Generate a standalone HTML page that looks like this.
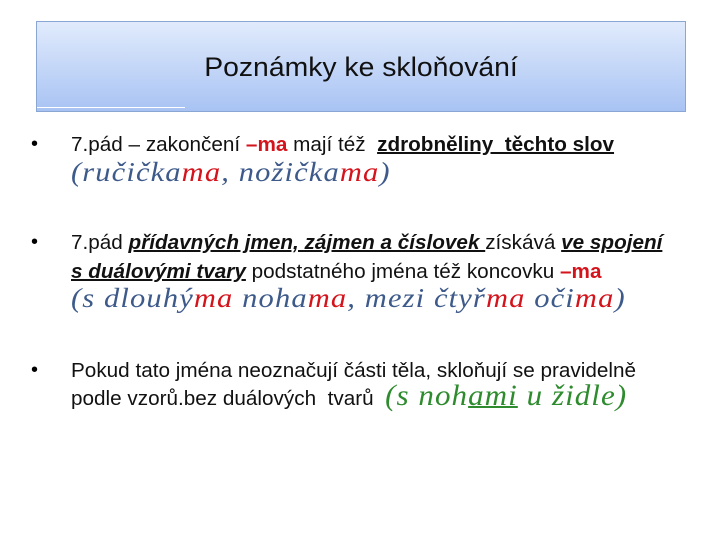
<!DOCTYPE html>
<html><head><meta charset="utf-8"><style>
body{margin:0;width:720px;height:540px;background:#fff;position:relative;overflow:hidden;font-family:"Liberation Sans",sans-serif;}
.box{position:absolute;left:36px;top:21px;width:648px;height:89px;border:1px solid #8aa6d2;background:linear-gradient(#e1ebfc,#a8c3f3);}
.box .t{position:absolute;left:0;right:0;top:30px;text-align:center;font-size:27px;color:#111;transform:scaleX(1.05);}
.box .u{position:absolute;left:0;bottom:3px;width:148px;height:1px;background:#fff;}
.l{position:absolute;white-space:nowrap;font-size:20px;line-height:24px;color:#111;transform-origin:left top;transform:scaleX(1.035);}
.b{position:absolute;left:31px;font-size:20px;}
.s{font-family:"Liberation Serif",serif;font-style:italic;font-size:27px;line-height:30px;color:#3d5a8a;letter-spacing:1px;transform:scaleX(1.13)}
.r{color:#d4141c}
.g{color:#2e8b2e;font-family:"Liberation Serif",serif;font-style:italic;font-size:30px;line-height:20px;letter-spacing:1px}
u{text-decoration-thickness:2px}
</style></head><body>
<div class="box"><div class="t">Poznámky ke skloňování</div><div class="u"></div></div>
<div class="b" style="top:133px">•</div>
<div class="l" style="left:71px;top:133px">7.pád – zakončení <b class="r">–ma</b> mají též &nbsp;<b><u>zdrobněliny &nbsp;těchto slov</u></b></div>
<div class="l s" style="left:71px;top:157px">(ručička<span class="r">ma</span>, nožička<span class="r">ma</span>)</div>
<div class="b" style="top:231px">•</div>
<div class="l" style="left:71px;top:231px">7.pád <b><i><u>přídavných jmen, zájmen a číslovek </u></i></b>získává <b><i><u>ve spojení</u></i></b></div>
<div class="l" style="left:71px;top:260px"><b><i><u>s duálovými tvary</u></i></b> podstatného jména též koncovku <b class="r">–ma</b></div>
<div class="l s" style="left:71px;top:283px">(s dlouhý<span class="r">ma</span> noha<span class="r">ma</span>, mezi čtyř<span class="r">ma</span> oči<span class="r">ma</span>)</div>
<div class="b" style="top:359px">•</div>
<div class="l" style="left:71px;top:359px">Pokud tato jména neoznačují části těla, skloňují se pravidelně</div>
<div class="l" style="left:71px;top:386px">podle vzorů.bez duálových &nbsp;tvarů &nbsp;<span class="g">(s noh<u>ami</u> u židle)</span></div>
</body></html>
